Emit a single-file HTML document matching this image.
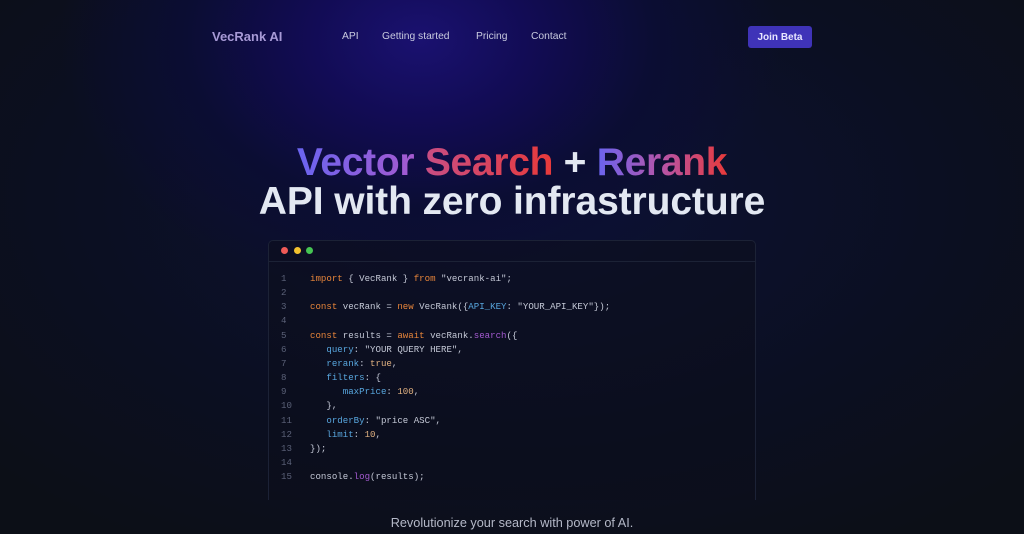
<!DOCTYPE html>
<html><head><meta charset="utf-8"><style>
*{margin:0;padding:0;box-sizing:border-box}
body{width:1024px;height:534px;overflow:hidden;font-family:"Liberation Sans",sans-serif;
background:radial-gradient(ellipse 360px 260px at 420px 40px,#1a1170 0%,#120c55 30%,#0b0d33 65%,transparent 100%),
radial-gradient(ellipse 700px 400px at 512px 200px,#0d1236 0%,#0b0f22 60%,#0c0f17 100%);position:relative;color:#cdd1e0}
.nav{position:absolute;top:0;left:0;width:100%;height:72px}
.logo{position:absolute;left:212px;top:29px;font-weight:bold;font-size:13px;color:#a79ad6}
.links a{position:absolute;top:31px;font-size:10.3px;color:#c9cbe0;text-decoration:none}
.btn{position:absolute;left:748px;top:26px;width:64px;height:22px;background:#3f33b8;border-radius:3px;color:#e8e6ff;font-size:10px;font-weight:bold;text-align:center;line-height:23px}
h1{position:absolute;top:143px;left:0;width:1024px;text-align:center;font-size:39px;line-height:39px;font-weight:bold;letter-spacing:-0.1px}
.l1{letter-spacing:-0.3px}
.g1{background:linear-gradient(90deg,#6a64f0,#a45ad0);-webkit-background-clip:text;color:transparent}
.g2{background:linear-gradient(90deg,#c84e84,#e83a3a);-webkit-background-clip:text;color:transparent}
.g3{background:linear-gradient(90deg,#6a64f0,#b655a8,#e83a3a);-webkit-background-clip:text;color:transparent}
.w{color:#e3e8f2}
.code{position:absolute;left:268px;top:240px;width:488px;height:260px;border:1px solid #1c2236;border-bottom:none;border-radius:5px 5px 0 0;background:rgba(12,15,28,.55)}
.hd{height:21px;border-bottom:1px solid #1c2236;position:relative}
.d{position:absolute;top:6px;width:7px;height:7px;border-radius:50%}
pre{position:absolute;left:12px;top:31px;font-family:"Liberation Mono",monospace;font-size:9.1px;line-height:14.15px;color:#c4c8d6}
.n{color:#5b6178;display:inline-block;width:29px}
.k{color:#e8853a}.s{color:#c8cde0}.p{color:#58a6de}.f{color:#a45ad0}.num{color:#e0b080}
.sub{position:absolute;top:516px;left:0;width:1024px;text-align:center;font-size:12.7px;color:#b5b9c8}
</style></head><body>
<div class="nav">
<div class="logo">VecRank AI</div>
<div class="links"><a style="left:342px">API</a><a style="left:382px">Getting started</a><a style="left:476px">Pricing</a><a style="left:531px">Contact</a></div>
<div class="btn">Join Beta</div>
</div>
<h1><span class="l1"><span class="g1">Vector</span> <span class="g2">Search</span> <span class="w">+</span> <span class="g3">Rerank</span></span><br><span class="w">API with zero infrastructure</span></h1>
<div class="code">
<div class="hd"><div class="d" style="left:12px;background:#ef5a57"></div><div class="d" style="left:25px;background:#f2c12e"></div><div class="d" style="left:37px;background:#46c553"></div></div>
<pre><span class="n">1</span><span class="k">import</span> { VecRank } <span class="k">from</span> "vecrank-ai";
<span class="n">2</span>
<span class="n">3</span><span class="k">const</span> vecRank = <span class="k">new</span> VecRank({<span class="p">API_KEY</span>: "YOUR_API_KEY"});
<span class="n">4</span>
<span class="n">5</span><span class="k">const</span> results = <span class="k">await</span> vecRank.<span class="f">search</span>({
<span class="n">6</span>   <span class="p">query</span>: "YOUR QUERY HERE",
<span class="n">7</span>   <span class="p">rerank</span>: <span class="num">true</span>,
<span class="n">8</span>   <span class="p">filters</span>: {
<span class="n">9</span>      <span class="p">maxPrice</span>: <span class="num">100</span>,
<span class="n">10</span>   },
<span class="n">11</span>   <span class="p">orderBy</span>: "price ASC",
<span class="n">12</span>   <span class="p">limit</span>: <span class="num">10</span>,
<span class="n">13</span>});
<span class="n">14</span>
<span class="n">15</span>console.<span class="f">log</span>(results);</pre>
</div>
<div class="sub">Revolutionize your search with power of AI.</div>
</body></html>
